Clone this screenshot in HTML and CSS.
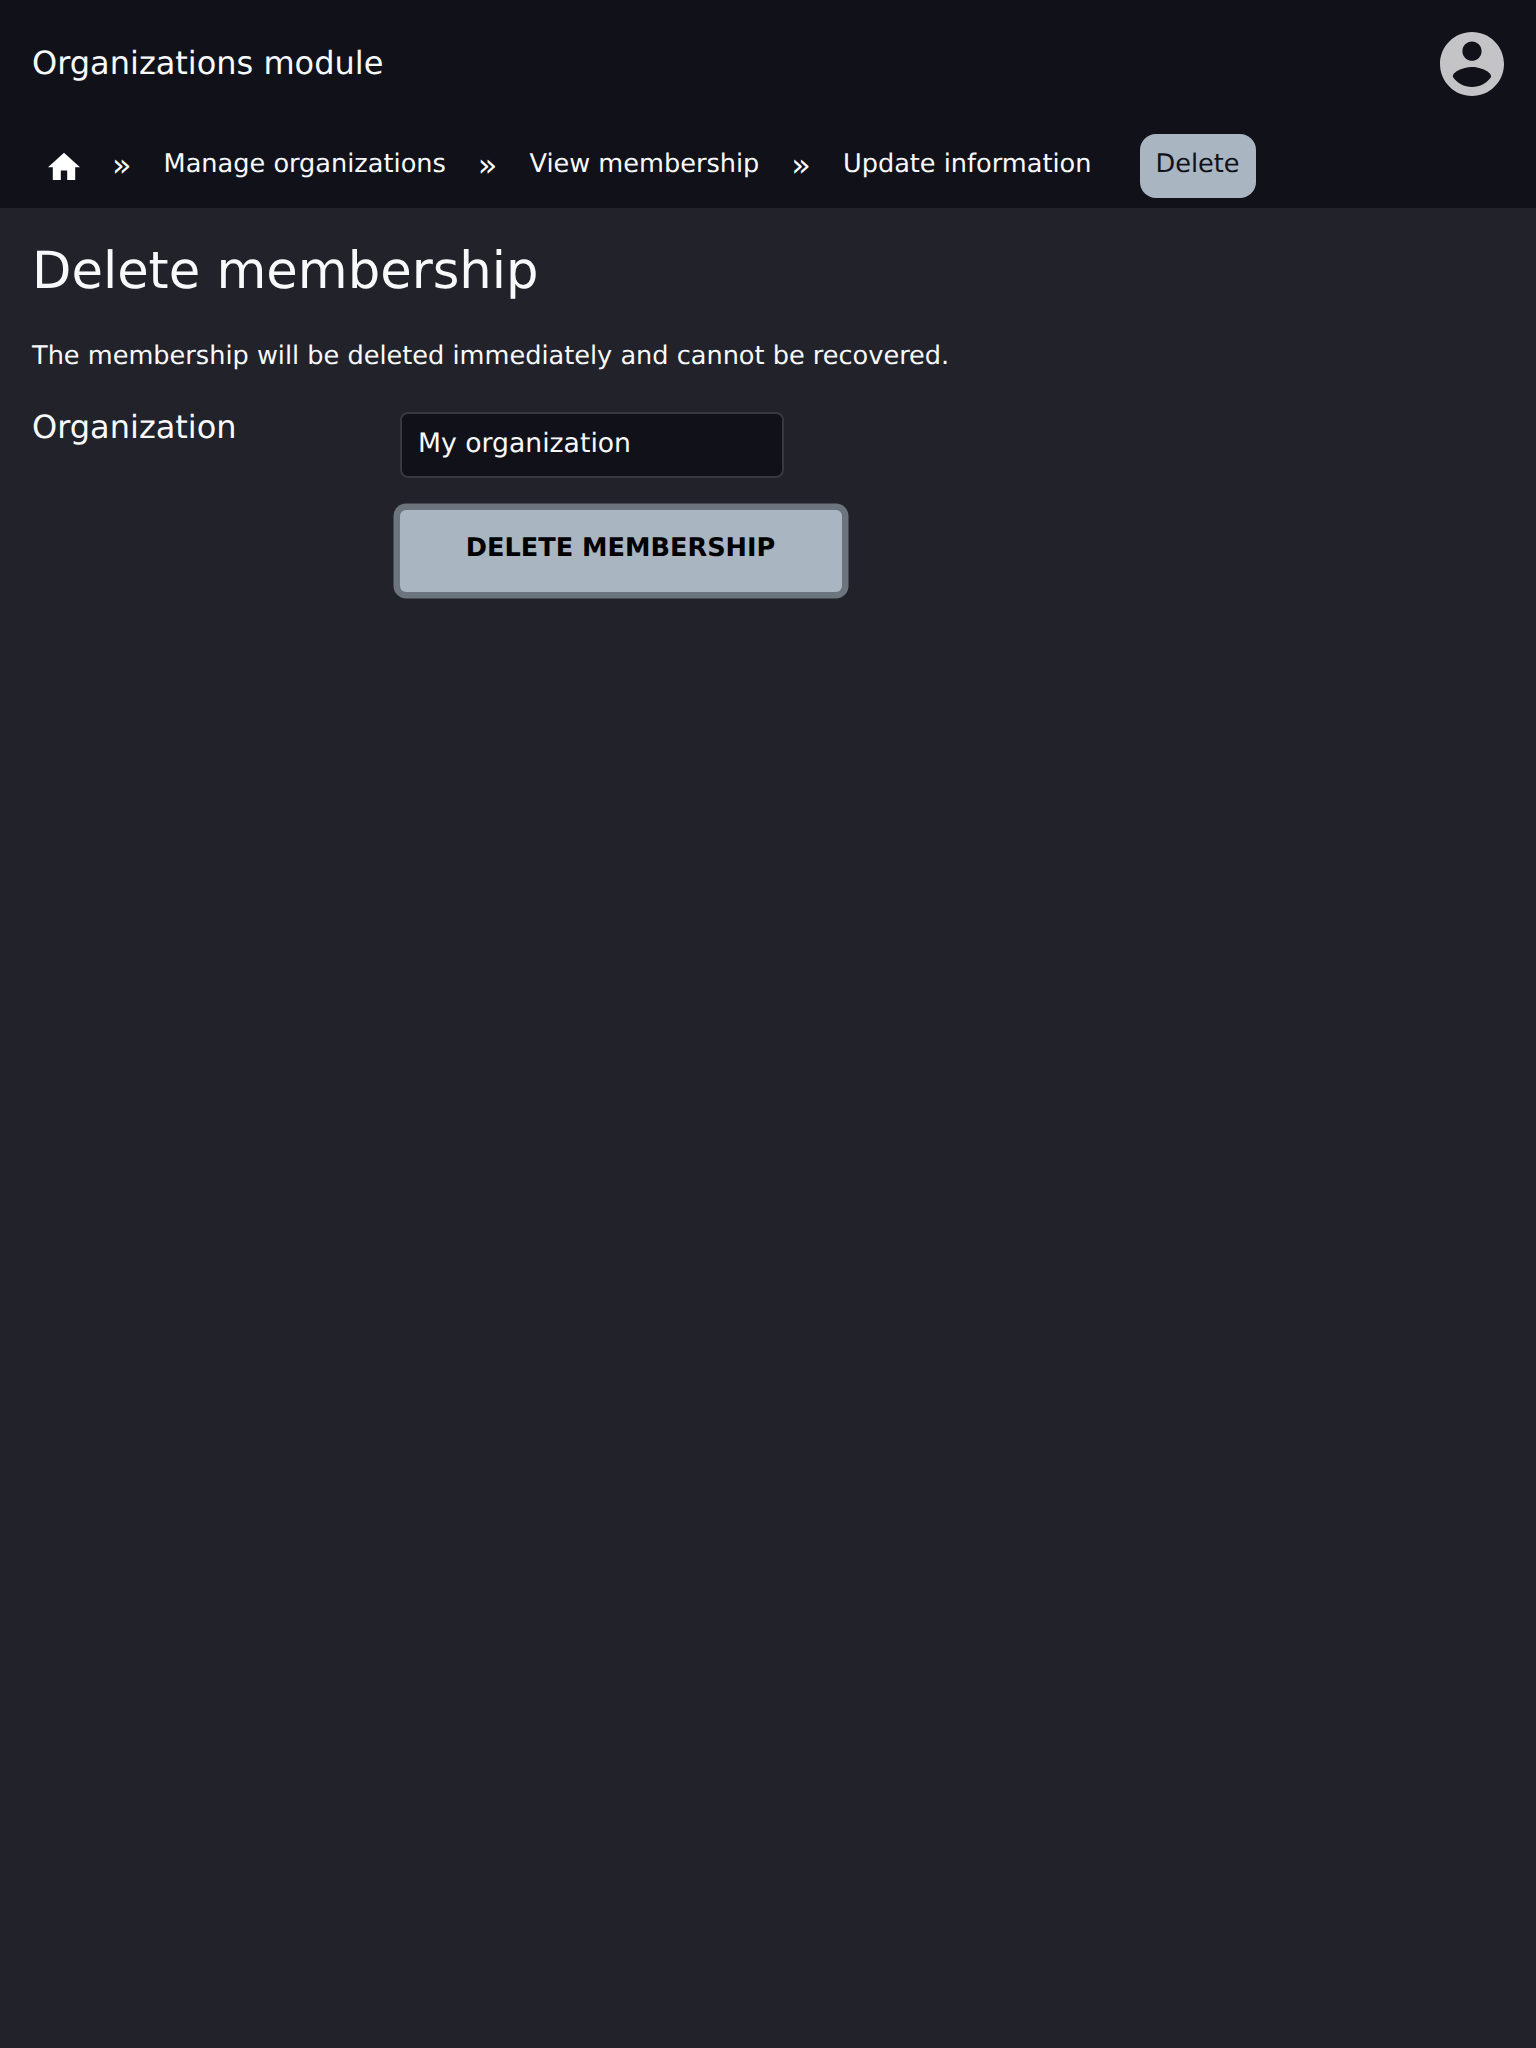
FILE: index.html
```html
<!DOCTYPE html>
<html lang="en">
<head>
<meta charset="utf-8">
<title>Delete membership</title>
<link rel="stylesheet" href="styles.css">
</head>
<body>
<header class="header">
  <div class="topbar">
    <span class="module">Organizations module</span>
    <svg class="avatar" viewBox="2 2 20 20"><path d="M12 2C6.48 2 2 6.48 2 12s4.48 10 10 10 10-4.48 10-10S17.52 2 12 2zm0 3c1.66 0 3 1.34 3 3s-1.34 3-3 3-3-1.34-3-3 1.34-3 3-3zm0 14.2c-2.5 0-4.71-1.28-6-3.22.03-1.99 4-3.08 6-3.08 1.99 0 5.97 1.09 6 3.08-1.29 1.94-3.5 3.22-6 3.22z"/></svg>
  </div>
  <nav class="crumbs">
    <a class="home"><svg class="home-icon" viewBox="2 2.5 20 17.5"><path d="M10 20v-6h4v6h5v-8h3L12 3 2 12h3v8z"/></svg></a>
    <span class="sep">»</span>
    <a class="crumb">Manage organizations</a>
    <span class="sep">»</span>
    <a class="crumb">View membership</a>
    <span class="sep">»</span>
    <a class="crumb">Update information</a>
    <a class="crumb current">Delete</a>
  </nav>
</header>
<main class="main">
  <h1 class="title">Delete membership</h1>
  <p class="lead">The membership will be deleted immediately and cannot be recovered.</p>
  <form class="form">
    <label class="label" for="org">Organization</label>
    <div class="fields">
      <div class="input" id="org">My organization</div>
      <button class="submit" type="button">DELETE MEMBERSHIP</button>
    </div>
  </form>
</main>
</body>
</html>
```
FILE: styles.css
```css
* { box-sizing: border-box; }
body {
  margin: 0;
  min-height: 2048px;
  background: #22222b;
  color: #f8f9fa;
  font: 25.6px/38px "DejaVu Sans", sans-serif;
  text-rendering: geometricPrecision;
}
.header { height: 208px; background: #11111a; }
.topbar {
  display: flex;
  justify-content: space-between;
  padding: 32px 32px 0;
  height: 134px;
}
.module { font-size: 32px; line-height: 62px; }
.avatar { width: 64px; height: 64px; fill: #c4c4c6; }
.crumbs { display: flex; padding-left: 48px; height: 64px; line-height: 60px; white-space: nowrap; }
.home { width: 32px; padding-top: 18px; line-height: 0; }
.home-icon { width: 32px; height: 28px; fill: #fff; }
.sep { padding: 0 32px; font-size: 32px; line-height: 62px; }
.current {
  margin-left: 48.5px;
  padding: 0 16px 0 15.5px;
  border-radius: 16px;
  background: #a9b5c0;
  color: #11111a;
}
.main { padding: 32px; }
.title { margin: 0; font-size: 51.2px; font-weight: 400; line-height: 62px; }
.lead { margin: 35px 0 0; line-height: 38px; }
.form { display: flex; margin-top: 37px; }
.label { width: 368px; font-size: 32px; line-height: 30px; }
.fields { display: flex; flex-direction: column; align-items: flex-start; gap: 32px; }
.input {
  width: 384px;
  height: 66px;
  padding: 0 16px;
  border: 2px solid #343a40;
  border-radius: 8px;
  background: #11111a;
  font-size: 26.667px;
  line-height: 59px;
}
.submit {
  width: 442px;
  height: 82px;
  padding: 0 1px 6px 0;
  border: 0;
  border-radius: 6px;
  background: #a9b5c0;
  color: #000;
  box-shadow: 0 0 0 6.5px #6c757d;
  font: 700 25.6px/76px "DejaVu Sans", sans-serif;
  text-rendering: geometricPrecision;
}
```
